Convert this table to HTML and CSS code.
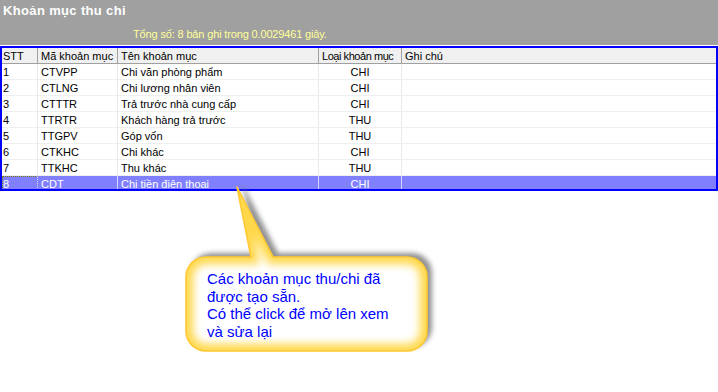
FILE: index.html
```
<!DOCTYPE html>
<html lang="vi">
<head>
<meta charset="utf-8">
<title>Khoản mục thu chi</title>
<link rel="stylesheet" href="styles.css">
</head>
<body>
<div class="panel">
  <div class="title">Khoản mục thu chi</div>
  <div class="summary">Tổng số: 8 bản ghi trong 0.0029461 giây.</div>
</div>
<div class="grid">
  <div class="row head">
    <div class="cell c1">STT</div>
    <div class="cell">Mã khoản mục</div>
    <div class="cell">Tên khoản mục</div>
    <div class="cell tight">Loại khoản mục</div>
    <div class="cell last">Ghi chú</div>
  </div>
  <div class="row">
    <div class="cell c1">1</div><div class="cell">CTVPP</div><div class="cell">Chi văn phòng phẩm</div><div class="cell mid">CHI</div><div class="cell last"></div>
  </div>
  <div class="row">
    <div class="cell c1">2</div><div class="cell">CTLNG</div><div class="cell">Chi lương nhân viên</div><div class="cell mid">CHI</div><div class="cell last"></div>
  </div>
  <div class="row">
    <div class="cell c1">3</div><div class="cell">CTTTR</div><div class="cell">Trả trước nhà cung cấp</div><div class="cell mid">CHI</div><div class="cell last"></div>
  </div>
  <div class="row">
    <div class="cell c1">4</div><div class="cell">TTRTR</div><div class="cell">Khách hàng trả trước</div><div class="cell mid">THU</div><div class="cell last"></div>
  </div>
  <div class="row">
    <div class="cell c1">5</div><div class="cell">TTGPV</div><div class="cell">Góp vốn</div><div class="cell mid">THU</div><div class="cell last"></div>
  </div>
  <div class="row">
    <div class="cell c1">6</div><div class="cell">CTKHC</div><div class="cell">Chi khác</div><div class="cell mid">CHI</div><div class="cell last"></div>
  </div>
  <div class="row">
    <div class="cell c1">7</div><div class="cell">TTKHC</div><div class="cell">Thu khác</div><div class="cell mid">THU</div><div class="cell last"></div>
  </div>
  <div class="row selected">
    <div class="cell c1 focus">8</div><div class="cell">CDT</div><div class="cell">Chi tiền điện thoại</div><div class="cell mid">CHI</div><div class="cell last"></div>
  </div>
</div>

<div class="callout">
  <svg class="bubble" width="260" height="180" viewBox="0 0 260 180">
    <defs>
      <clipPath id="shape">
        <path d="M26 77 L71 77 L57 7 L93 77 L227 77 A20 20 0 0 1 247 97 L247 151 A20 20 0 0 1 227 171 L26 171 A20 20 0 0 1 6 151 L6 97 A20 20 0 0 1 26 77 Z"/>
      </clipPath>
      <filter id="blur" x="-20%" y="-20%" width="140%" height="140%">
        <feGaussianBlur stdDeviation="2.5"/>
      </filter>
      <filter id="glow" x="-20%" y="-20%" width="140%" height="140%">
        <feGaussianBlur stdDeviation="4"/>
      </filter>
    </defs>
    <path transform="translate(5 -4)" fill="#6e6e6e" opacity="0.75" filter="url(#blur)" d="M26 77 L71 77 L57 7 L93 77 L227 77 A20 20 0 0 1 247 97 L247 151 A20 20 0 0 1 227 171 L26 171 A20 20 0 0 1 6 151 L6 97 A20 20 0 0 1 26 77 Z"/>
    <g clip-path="url(#shape)">
      <rect x="0" y="0" width="260" height="180" fill="#ffffff"/>
      <path fill="none" stroke="#ffd84a" stroke-width="14" filter="url(#glow)" d="M26 77 L71 77 L57 7 L93 77 L227 77 A20 20 0 0 1 247 97 L247 151 A20 20 0 0 1 227 171 L26 171 A20 20 0 0 1 6 151 L6 97 A20 20 0 0 1 26 77 Z"/>
    </g>
    <path fill="none" stroke="#ffc933" stroke-width="1.6" stroke-linejoin="round" d="M26 77 L71 77 L57 7 L93 77 L227 77 A20 20 0 0 1 247 97 L247 151 A20 20 0 0 1 227 171 L26 171 A20 20 0 0 1 6 151 L6 97 A20 20 0 0 1 26 77 Z"/>
  </svg>
  <div class="note">Các khoản mục thu/chi đã<br>được tạo sẵn.<br>Có thể click để mở lên xem<br>và sửa lại</div>
</div>
</body>
</html>
```
FILE: styles.css
```
html, body {
  margin: 0;
  padding: 0;
}
body {
  width: 718px;
  height: 392px;
  background: #ffffff;
  position: relative;
  overflow: hidden;
  font-family: "Liberation Sans", Arial, sans-serif;
}
.panel {
  height: 45px;
  box-sizing: border-box;
  background: #a0a0a0;
  padding: 3px 0 0 3px;
}
.title {
  color: #ffffff;
  font-weight: bold;
  font-size: 13px;
  letter-spacing: 0.35px;
  line-height: 16px;
}
.summary {
  margin-top: 9px;
  padding-left: 130px;
  color: #ffff99;
  font-size: 11px;
  line-height: 13px;
  letter-spacing: -0.15px;
}
.grid {
  margin-top: 1px;
  border: 2px solid #0000ff;
  height: 141px;
  overflow: hidden;
  background: #ffffff;
}
.row {
  display: grid;
  grid-template-columns: 36px 80px 201px 83px 1fr;
  height: 16px;
  box-sizing: border-box;
  border-bottom: 1px solid #efefef;
  font-size: 11px;
  color: #000000;
}
.cell {
  box-sizing: border-box;
  border-right: 1px solid #e9e9e9;
  padding: 1px 0 0 3px;
  line-height: 14px;
  white-space: nowrap;
  overflow: hidden;
}
.cell.c1 {
  padding-left: 1px;
}
.cell.tight {
  letter-spacing: -0.45px;
}
.cell.mid {
  text-align: center;
  padding-left: 0;
}
.cell.last {
  border-right: none;
}
.row.head {
  background: #f0f0f0;
  border-bottom: 1px solid #a0a0a0;
}
.row.head .cell {
  border-right-color: #a0a0a0;
}
.row.head .cell.last {
  border-right: none;
}
.row.selected {
  background: #8080ff;
  color: #ffffff;
  border-bottom: none;
}
.row.selected .cell {
  border-right-color: #d6d6ff;
}
.row.selected .cell.last {
  border-right: none;
}
.cell.focus {
  border: 1px dotted #7f7f00;
  padding: 0 0 0 0;
}
.callout {
  position: absolute;
  left: 180px;
  top: 180px;
  width: 260px;
  height: 180px;
  pointer-events: none;
}
.bubble {
  display: block;
}
.note {
  position: absolute;
  left: 27px;
  top: 90px;
  color: #0000ff;
  font-size: 15px;
  line-height: 17.6px;
  white-space: nowrap;
}
```
